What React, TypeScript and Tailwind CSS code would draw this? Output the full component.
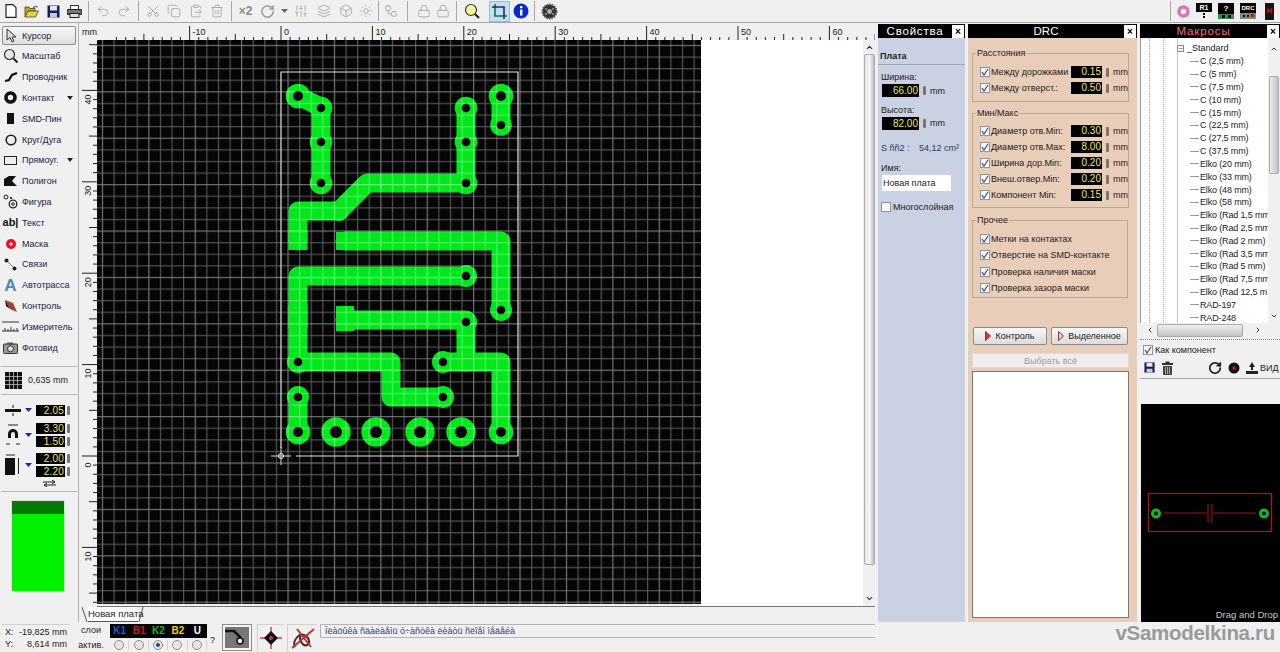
import React from "react";
import {
  Undo2,
  Redo2,
  Scissors,
  Copy,
  ClipboardPaste,
  Trash2,
  RotateCw,
  ChevronUp,
  ChevronDown,
  ChevronLeft,
  ChevronRight,
  Lock,
  Sun,
  Workflow,
  SlidersVertical,
  Layers,
  Box,
} from "lucide-react";

const GREEN = "#00e81c";

const Sep = ({ w }: { w: string }) => (
  <div className={`${w} h-[20px] flex justify-center shrink-0`}>
    <div className="w-px h-full bg-[#a8a8a8]" />
  </div>
);

const Slot = ({ w, children }: { w: string; children: React.ReactNode }) => (
  <div className={`${w} h-[22px] flex items-center justify-center shrink-0`}>{children}</div>
);

const grayIcon = { size: 14, color: "#a9a9a9", strokeWidth: 1.6 };

const SaveIcon = ({ size = 13 }: { size?: number }) => (
  <svg width={size} height={size} viewBox="0 0 13 13">
    <rect x="0.5" y="0.5" width="12" height="12" fill="#12205e" />
    <rect x="3" y="1" width="7" height="4.5" fill="#e8e8e8" />
    <rect x="3" y="8" width="7" height="4.5" fill="#c8c8d8" />
  </svg>
);

const TrashSolid = () => (
  <svg width="13" height="14" viewBox="0 0 13 14">
    <rect x="1" y="2" width="11" height="2" fill="#333" />
    <rect x="4.5" y="0.5" width="4" height="2" fill="#333" />
    <path d="M2 5h9v9H2z" fill="#444" />
    <path d="M4.5 6v7M6.5 6v7M8.5 6v7" stroke="#bbb" strokeWidth="0.8" />
  </svg>
);

const Toolbar = () => (
  <div className="h-[23px] flex items-center bg-[#f0f0f0] border-b border-[#a6a6a6] shrink-0">
    <Slot w="w-[21px]">
      <svg width="12" height="14" viewBox="0 0 12 14">
        <path d="M1 .7h7l3 3v9.6H1z" fill="#fff" stroke="#222" strokeWidth="1.2" />
      </svg>
    </Slot>
    <Slot w="w-[21.5px]">
      <svg width="15" height="13" viewBox="0 0 15 13">
        <path d="M1 2h4l1 1.5h5V6H4L1 12z" fill="#c8a430" stroke="#4a4a10" strokeWidth=".8" />
        <path d="M1 12l3-6h10.5l-3 6z" fill="#e6cf57" stroke="#4a4a10" strokeWidth=".8" />
        <path d="M9 3c2-2.4 3.5-2 4.5-.6" stroke="#2c7a2c" fill="none" strokeWidth="1.2" />
      </svg>
    </Slot>
    <Slot w="w-[21.5px]">
      <SaveIcon />
    </Slot>
    <Slot w="w-[21px]">
      <svg width="15" height="13" viewBox="0 0 15 13">
        <rect x="3.5" y=".5" width="8" height="4" fill="#fff" stroke="#333" />
        <rect x=".7" y="4.5" width="13.6" height="5" fill="#777" stroke="#222" />
        <rect x="3" y="8.5" width="9" height="4" fill="#ddd" stroke="#222" />
      </svg>
    </Slot>
    <Sep w="w-[7px]" />
    <Slot w="w-[21.5px]">
      <Undo2 {...grayIcon} />
    </Slot>
    <Slot w="w-[21.5px]">
      <Redo2 {...grayIcon} />
    </Slot>
    <Sep w="w-[7px]" />
    <Slot w="w-[21.5px]">
      <Scissors {...grayIcon} className="-rotate-90" />
    </Slot>
    <Slot w="w-[21.5px]">
      <Copy {...grayIcon} />
    </Slot>
    <Slot w="w-[21.5px]">
      <ClipboardPaste {...grayIcon} />
    </Slot>
    <Slot w="w-[21.5px]">
      <Trash2 {...grayIcon} />
    </Slot>
    <Sep w="w-[7px]" />
    <Slot w="w-[21px]">
      <span className="text-[12px] font-bold text-[#8a8a8a]">×2</span>
    </Slot>
    <Slot w="w-[22px]">
      <RotateCw size={15} color="#9a9a9a" strokeWidth={2.4} />
    </Slot>
    <Slot w="w-[12px]">
      <svg width="7" height="4" viewBox="0 0 7 4">
        <path d="M0 0h7L3.500 4z" fill="#666" />
      </svg>
    </Slot>
    <Slot w="w-[22px]">
      <SlidersVertical {...grayIcon} />
    </Slot>
    <Slot w="w-[23px]">
      <Layers {...grayIcon} />
    </Slot>
    <Slot w="w-[21px]">
      <Box {...grayIcon} />
    </Slot>
    <Slot w="w-[19px]">
      <Sun {...grayIcon} />
    </Slot>
    <Sep w="w-[7px]" />
    <Slot w="w-[18px]">
      <Workflow {...grayIcon} />
    </Slot>
    <Sep w="w-[14px]" />
    <Slot w="w-[19px]">
      <Lock {...grayIcon} />
    </Slot>
    <Slot w="w-[19px]">
      <Lock {...grayIcon} />
    </Slot>
    <Sep w="w-[8px]" />
    <Slot w="w-[24px]">
      <svg width="16" height="16" viewBox="0 0 16 16">
        <circle cx="7" cy="7" r="5.500" fill="#f6f59a" stroke="#333" strokeWidth="1.200" />
        <path d="M11 11l4 4" stroke="#222" strokeWidth="2.200" />
      </svg>
    </Slot>
    <div className="w-[21px] h-[21px] ml-[5px] flex items-center justify-center bg-[#c9dcf5] border border-[#9bb8de] shrink-0">
      <svg width="15" height="15" viewBox="0 0 15 15">
        <path d="M3 0v12h12" stroke="#0a7a3a" fill="none" strokeWidth="1.600" />
        <path d="M0 3h12v12" stroke="#12307e" fill="none" strokeWidth="1.600" />
      </svg>
    </div>
    <Slot w="w-[22px]">
      <svg width="16" height="16" viewBox="0 0 16 16">
        <circle cx="8" cy="8" r="7.500" fill="#0a28d0" />
        <rect x="7" y="6.500" width="2.400" height="6" fill="#fff" />
        <rect x="7" y="3" width="2.400" height="2.200" fill="#fff" />
      </svg>
    </Slot>
    <Sep w="w-[4px]" />
    <Slot w="w-[26px]">
      <svg width="17" height="17" viewBox="0 0 17 17">
        <circle cx="8.500" cy="8.500" r="7" fill="#333" stroke="#555" strokeWidth="2" strokeDasharray="1.500 1" />
        <circle cx="8.500" cy="8.500" r="2.500" fill="#aaa" />
        <circle cx="5" cy="6" r="1" fill="#999" />
        <circle cx="12" cy="6" r="1" fill="#999" />
        <circle cx="5" cy="11" r="1" fill="#999" />
        <circle cx="12" cy="11" r="1" fill="#999" />
      </svg>
    </Slot>
    <div className="flex-1" />
    <Sep w="w-[5px]" />
    <Slot w="w-[20px]">
      <svg width="13" height="13" viewBox="0 0 13 13">
        <circle cx="6.500" cy="6.500" r="4.500" fill="none" stroke="#d874b8" strokeWidth="3.500" />
      </svg>
    </Slot>
    <Slot w="w-[22px]">
      <div className="w-[16px] h-[17px] flex flex-col items-center">
        <span className="w-full bg-black text-white text-[7px] leading-[9px] font-bold text-center">R1</span>
        <span className="w-[2px] h-[2px] bg-black mt-[1px]" />
        <span className="w-[2px] h-[2px] bg-black mt-[1px]" />
      </div>
    </Slot>
    <Slot w="w-[22px]">
      <div className="w-[16px] h-[17px] flex flex-col">
        <span className="w-full bg-black text-white text-[8px] leading-[11px] font-bold text-center">?</span>
        <span className="h-[5px] bg-[#3e8a4e] flex justify-center items-center gap-[3px]">
          <span className="w-[3px] h-[3px] bg-black" />
          <span className="w-[3px] h-[3px] bg-black" />
        </span>
      </div>
    </Slot>
    <Slot w="w-[22px]">
      <div className="w-[16px] h-[17px] flex flex-col">
        <span className="w-full bg-black text-white text-[6px] leading-[10px] font-bold text-center">DRC</span>
        <span className="h-[6px] bg-[#7d8b6e] flex justify-center items-center gap-[2px]">
          <span className="w-[2px] h-[2px] bg-black" />
          <span className="w-[2px] h-[2px] bg-black" />
          <span className="w-[3px] h-[3px] bg-[#c81010]" />
        </span>
      </div>
    </Slot>
    <Slot w="w-[21px]">
      <div className="w-[9px] h-[17px] bg-[#151515] flex items-center justify-center">
        <span className="text-[#c81818] text-[8px] font-bold">H</span>
      </div>
    </Slot>
  </div>
);

const ToolIcon = ({ name }: { name: string }) => {
  switch (name) {
    case "cursor":
      return (
        <svg width="12" height="15" viewBox="0 0 12 15">
          <path d="M1 1v11l3-2.500 2 4.500 2-1-2-4h4z" fill="#ddd" stroke="#333" strokeWidth="1" />
        </svg>
      );
    case "zoom":
      return (
        <svg width="16" height="16" viewBox="0 0 16 16">
          <circle cx="6.500" cy="6.500" r="5" fill="#e4e8e4" stroke="#333" strokeWidth="1.200" />
          <path d="M10.500 10.500l4 4" stroke="#222" strokeWidth="2" />
        </svg>
      );
    case "wire":
      return (
        <svg width="14" height="10" viewBox="0 0 14 10">
          <path d="M1 9l4-1 3-5 5-2" fill="none" stroke="#111" strokeWidth="2.200" />
        </svg>
      );
    case "pad":
      return (
        <svg width="13" height="13" viewBox="0 0 13 13">
          <circle cx="6.500" cy="6.500" r="4.500" fill="none" stroke="#111" strokeWidth="3.600" />
        </svg>
      );
    case "smd":
      return <span className="block w-[7px] h-[11px] bg-[#111]" />;
    case "circle":
      return (
        <svg width="12" height="12" viewBox="0 0 12 12">
          <circle cx="6" cy="6" r="4.800" fill="#eee" stroke="#222" strokeWidth="1.600" />
        </svg>
      );
    case "rect":
      return <span className="block w-[13px] h-[9px] border-[1.500px] border-[#222] bg-[#eee]" />;
    case "poly":
      return (
        <svg width="13" height="10" viewBox="0 0 13 10">
          <path d="M0 10V3l5-3h7L8 5l5 5z" fill="#111" />
        </svg>
      );
    case "shape":
      return (
        <svg width="15" height="15" viewBox="0 0 15 15">
          <circle cx="3" cy="3" r="2" fill="#eee" stroke="#222" />
          <circle cx="10" cy="10" r="3.800" fill="none" stroke="#222" strokeWidth="1.300" />
          <circle cx="10" cy="10" r="1.300" fill="none" stroke="#222" />
          <path d="M7 3h2v2H7z" fill="#333" />
        </svg>
      );
    case "text":
      return <span className="text-[11px] font-bold text-[#111] leading-none">ab|</span>;
    case "mask":
      return (
        <svg width="12" height="12" viewBox="0 0 12 12">
          <circle cx="6" cy="6" r="5" fill="#e8102c" />
          <circle cx="6" cy="6" r="1.700" fill="#f4c8c8" />
        </svg>
      );
    case "links":
      return (
        <svg width="13" height="13" viewBox="0 0 13 13">
          <path d="M2 2l9 9" stroke="#777" />
          <circle cx="2.500" cy="2.500" r="2" fill="#222" />
          <circle cx="10.500" cy="10.500" r="2" fill="#222" />
        </svg>
      );
    case "auto":
      return <span className="text-[17px] font-bold leading-none text-[#4f86b5]">A</span>;
    case "check":
      return (
        <svg width="14" height="14" viewBox="0 0 14 14">
          <path d="M1 1l8 3 4 9-7-3z" fill="#a84030" />
          <path d="M1 1l5 9-4-3z" fill="#111" />
        </svg>
      );
    case "measure":
      return (
        <svg width="17" height="11" viewBox="0 0 17 11">
          <path d="M0 1h17" stroke="#333" />
          <path d="M0 10h17M3 10V7M6 10V8M9 10V6M12 10V8M15 10V7" stroke="#333" />
        </svg>
      );
    default:
      return (
        <svg width="15" height="12" viewBox="0 0 15 12">
          <rect x=".5" y="2" width="14" height="9.500" rx="1" fill="#999" stroke="#333" />
          <rect x="4" y=".5" width="6" height="2" fill="#555" />
          <circle cx="7.500" cy="6.800" r="3" fill="#ddd" stroke="#333" />
        </svg>
      );
  }
};

const tools: { icon: string; label: string; arrow?: boolean }[] = [
  { icon: "zoom", label: "Масштаб" },
  { icon: "wire", label: "Проводник" },
  { icon: "pad", label: "Контакт", arrow: true },
  { icon: "smd", label: "SMD-Пин" },
  { icon: "circle", label: "Круг/Дуга" },
  { icon: "rect", label: "Прямоуг.", arrow: true },
  { icon: "poly", label: "Полигон" },
  { icon: "shape", label: "Фигура" },
  { icon: "text", label: "Текст" },
  { icon: "mask", label: "Маска" },
  { icon: "links", label: "Связи" },
  { icon: "auto", label: "Автотрасса" },
  { icon: "check", label: "Контроль" },
  { icon: "measure", label: "Измеритель" },
  { icon: "photo", label: "Фотовид" },
];

const Value = ({ v }: { v: string }) => (
  <div className="flex items-center gap-[2px]">
    <span className="w-[29px] h-[11px] bg-black text-[#e8e86a] text-[10px] leading-[11px] text-right pr-[1px] tracking-[0.2px]">
      {v}
    </span>
    <span className="w-[3px] h-[9px] bg-[#777] rounded-[1px]" />
  </div>
);

const BlueArrow = () => (
  <svg width="7" height="4" viewBox="0 0 7 4">
    <path d="M0 0h7L3.500 4z" fill="#1a2a9a" />
  </svg>
);

const LeftPanel = () => (
  <div className="w-[79px] shrink-0 border-r border-[#b0b0b0] pt-[3px] flex flex-col text-[9px] leading-[12px]">
    <div className="mx-[2px] w-[74px] h-[19px] flex items-center pl-[3px] gap-[4px] rounded-[2px] border border-[#8c8c8c] bg-gradient-to-b from-[#f8f8f8] to-[#dedede] text-[#1b2140] mb-[1px]">
      <ToolIcon name="cursor" />
      Курсор
    </div>
    {tools.map((t) => (
      <div key={t.label} className="h-[20.800px] flex items-center pl-[2px] text-[#1b2140]">
        <span className="w-[17px] flex justify-center shrink-0">
          <ToolIcon name={t.icon} />
        </span>
        <span className="ml-[3px] whitespace-nowrap">{t.label}</span>
        {t.arrow && (
          <svg width="6" height="4" viewBox="0 0 6 4" className="ml-auto mr-[5px]">
            <path d="M0 0h6L3 4z" fill="#222" />
          </svg>
        )}
      </div>
    ))}
    <div className="h-px bg-[#b8b8b8] mx-[1px] mt-[8px] shrink-0" />
    <div className="h-[27px] flex items-center pl-[5px] gap-[6px] text-[#222] shrink-0">
      <svg width="17" height="17" viewBox="0 0 17 17">
        <rect width="17" height="17" fill="#111" />
        <path d="M4.500 0v17M8.500 0v17M12.500 0v17M0 4.500h17M0 8.500h17M0 12.500h17" stroke="#bbb" strokeWidth=".8" />
      </svg>
      0,635 mm
    </div>
    <div className="h-px bg-[#b8b8b8] mx-[1px] shrink-0" />
    <div className="pt-[9px] pl-[5px] flex flex-col shrink-0">
      <div className="h-[13px] flex items-center">
        <svg width="16" height="11" viewBox="0 0 16 11" className="mr-[4px]">
          <path d="M0 5.500h16" stroke="#111" strokeWidth="3" />
          <path d="M8 0v3M8 8v3" stroke="#111" />
        </svg>
        <BlueArrow />
        <div className="ml-[4px] flex">
          <Value v="2.05" />
        </div>
      </div>
      <div className="h-[6px]" />
      <div className="h-[24px] flex items-center">
        <svg width="16" height="24" viewBox="0 0 16 24" className="mr-[4px]">
          <path d="M3 2h10" stroke="#222" />
          <path d="M8 6a5 5 0 00-5 5v4h3v-4a2 2 0 014 0v4h3v-4a5 5 0 00-5-5z" fill="#111" />
          <path d="M1 21h4M11 21h4" stroke="#222" />
        </svg>
        <BlueArrow />
        <div className="ml-[4px] flex flex-col gap-[2px]">
          <Value v="3.30" />
          <Value v="1.50" />
        </div>
      </div>
      <div className="h-[6.500px]" />
      <div className="h-[24px] flex items-center">
        <svg width="16" height="24" viewBox="0 0 16 24" className="mr-[4px]">
          <path d="M1 2h9" stroke="#222" />
          <rect x="0" y="5" width="10" height="17" fill="#111" />
          <path d="M13.500 5v16" stroke="#222" />
        </svg>
        <BlueArrow />
        <div className="ml-[4px] flex flex-col gap-[2px]">
          <Value v="2.00" />
          <Value v="2.20" />
        </div>
      </div>
      <svg width="15" height="7" viewBox="0 0 15 7" className="ml-[37px] mt-[3px]">
        <path d="M1 2h12M10 0l3 2-3 2M14 5H2M5 3L2 5l3 2" stroke="#222" fill="none" />
      </svg>
    </div>
    <div className="h-px bg-[#b8b8b8] mx-[1px] mt-[4px] shrink-0" />
    <div className="ml-[12px] w-[52px] h-[90px] mt-[9px] flex flex-col shrink-0 shadow-[0_0_0_1px_#ddd]">
      <div className="h-[13px] bg-[#007a00]" />
      <div className="flex-1 bg-[#00f000]" />
    </div>
  </div>
);

const TopRuler = () => {
  const ticks: React.ReactNode[] = [];
  for (let i = -18; i < 67; i++) {
    const x = 281 + i * 9.14 - 97;
    const t = i % 10 === 0;
    const m = i % 5 === 0;
    ticks.push(<path key={i} d={`M${x} 14V${t ? 0 : m ? 8 : 11}`} stroke="#222" strokeWidth="1" />);
    if (t && x < 780)
      ticks.push(
        <text key={`l${i}`} x={x + 3} y="9" fontSize="9" fill="#222" fontFamily="Liberation Sans, sans-serif">
          {i}
        </text>
      );
  }
  return (
    <svg width="778" height="14" className="block">
      {ticks}
    </svg>
  );
};

const LeftRuler = () => {
  const ticks: React.ReactNode[] = [];
  for (let i = -16; i < 46; i++) {
    const y = 456 - i * 9.14 - 40;
    const t = i % 10 === 0;
    const m = i % 5 === 0;
    ticks.push(<path key={i} d={`M15 ${y}H${t ? 0 : m ? 7 : 11}`} stroke="#222" strokeWidth="1" />);
    if (t)
      ticks.push(
        <text
          key={`l${i}`}
          x="0"
          y="0"
          fontSize="9"
          fill="#222"
          fontFamily="Liberation Sans, sans-serif"
          textAnchor="middle"
          transform={`translate(9 ${y + 9}) rotate(-90)`}
        >
          {Math.abs(i)}
        </text>
      );
  }
  return (
    <svg width="15" height="564" className="block shrink-0">
      {ticks}
    </svg>
  );
};

const tracks = [
  "M298 96L321 107",
  "M321 107V183",
  "M466 107V183",
  "M501 96V125",
  "M466 183H367L339 211H298V241",
  "M345 241H501V310",
  "M466 276H298V362",
  "M345 320H466V362",
  "M443 362H501V432",
  "M298 362H391V397H443",
  "M298 397V432",
];

const pads: [number, number, number, number][] = [
  [298, 96, 12.300, 5],
  [321, 108, 11.300, 4.300],
  [321, 142, 11.300, 4.300],
  [321, 183, 11.300, 4.300],
  [466, 108, 11.300, 4.300],
  [466, 142, 11.300, 4.300],
  [466, 183, 11.300, 4.300],
  [501, 96, 12.300, 5],
  [501, 125, 10.800, 4.300],
  [466, 276, 11, 4.300],
  [501, 310, 11, 4.300],
  [466, 322, 11, 4.300],
  [298, 362, 11, 4.300],
  [443, 362, 11, 4.300],
  [443, 397, 11, 4.300],
  [298, 397, 11, 4.300],
  [298, 432, 12.300, 5],
  [501, 432, 12.300, 5],
  [336, 432, 14.700, 6],
  [376, 432, 14.700, 6],
  [420, 432, 14.700, 6],
  [461, 432, 14.700, 6],
];

const Board = () => (
  <svg width="604" height="564" viewBox="97 40 604 564" className="block shrink-0">
    <defs>
      <pattern id="fine" x="97" y="40" width="11.600" height="11.600" patternUnits="userSpaceOnUse">
        <path d="M5.500 0V11.600M0 5.500H11.600" stroke="#fff" strokeOpacity=".37" strokeWidth="1" />
      </pattern>
      <pattern id="major" x="97" y="40" width="46.400" height="46.400" patternUnits="userSpaceOnUse">
        <path d="M5.500 0V46.400M0 5.500H46.400" stroke="#fff" strokeOpacity=".2" strokeWidth="1" />
      </pattern>
    </defs>
    <rect x="97" y="40" width="604" height="564" fill="#050505" />
    {tracks.map((d) => (
      <path key={d} d={d} fill="none" stroke={GREEN} strokeWidth="19" strokeLinejoin="round" strokeLinecap="round" />
    ))}
    <rect x="288.500" y="231" width="19" height="19" fill={GREEN} />
    <rect x="336" y="232" width="18" height="18" fill={GREEN} />
    <rect x="336" y="306" width="18" height="25" fill={GREEN} />
    <rect x="288.500" y="305" width="19" height="23" fill={GREEN} />
    <circle cx="339" cy="211" r="10" fill={GREEN} />
    {pads.map(([x, y, r]) => (
      <circle key={`${x}-${y}`} cx={x} cy={y} r={r} fill={GREEN} />
    ))}
    <rect x="97" y="40" width="604" height="564" fill="url(#fine)" />
    <rect x="97" y="40" width="604" height="564" fill="url(#major)" />
    {pads.map(([x, y, , h]) => (
      <circle key={`h${x}-${y}`} cx={x} cy={y} r={h} fill="#050505" />
    ))}
    <path d="M296 456H518V72H281V448" fill="none" stroke="#e4e4e4" strokeWidth="1.200" />
    <path d="M281 447V465M271 456H291" stroke="#ddd" strokeWidth="1" />
    <circle cx="281" cy="456" r="2.500" fill="none" stroke="#eee" />
  </svg>
);

const ScrollV = () => (
  <div className="w-[12px] shrink-0 h-[566px] bg-[#f0f0f0] flex flex-col items-center">
    <ChevronUp size={9} color="#333" strokeWidth={3} className="mt-[3px]" />
    <div className="w-[11px] h-[511px] mt-[2px] bg-gradient-to-r from-[#e8e8e8] via-[#f4f4f4] to-[#bcbcc4] border border-[#aaa] rounded-[2px]" />
    <ChevronDown size={9} color="#333" strokeWidth={3} className="mt-auto mb-[3px]" />
  </div>
);

const Center = () => (
  <div className="w-[798px] shrink-0 flex flex-col pt-[3px]">
    <div className="flex h-[14px] ml-[3px]">
      <span className="w-[15px] text-[9px] leading-[13px] text-[#222]">mm</span>
      <TopRuler />
    </div>
    <div className="flex ml-[3px] h-[567px]">
      <LeftRuler />
      <div className="flex items-start border-b border-[#777] h-[567px]">
        <Board />
        <div className="w-[162px] h-[566px] bg-white" />
        <ScrollV />
      </div>
    </div>
    <div className="h-[15px] ml-[3px] flex items-center text-[9.500px] text-[#222]">
      <svg width="6" height="15" viewBox="0 0 6 15" className="shrink-0">
        <path d="M0 0l5 15" stroke="#555" />
      </svg>
      <span className="w-[50px] h-[15px] bg-white border-b border-[#555] leading-[14px] whitespace-nowrap">
        Новая плата
      </span>
      <svg width="6" height="15" viewBox="0 0 6 15" className="shrink-0">
        <path d="M1 15L5 0" stroke="#555" />
      </svg>
    </div>
  </div>
);

const PanelHeader = ({ title, color = "text-white", track = "" }: { title: string; color?: string; track?: string }) => (
  <div className="h-[14px] bg-black flex items-center shrink-0">
    <span className={`flex-1 text-center text-[11.500px] leading-[14px] ${color} ${track}`}>{title}</span>
    <span className="w-[12px] h-[13px] bg-white text-black mr-[1px] text-[10px] leading-[13px] font-bold text-center">
      ×
    </span>
  </div>
);

const Check = ({ on = true }: { on?: boolean }) => (
  <span className="w-[10px] h-[10px] shrink-0 border border-[#8b93a5] bg-[#f4f6fa] flex items-center justify-center">
    {on && (
      <svg width="8" height="8" viewBox="0 0 8 8">
        <path d="M1 4l2 3 4-6" fill="none" stroke="#3a4a86" strokeWidth="1.200" />
      </svg>
    )}
  </span>
);

const Spin = () => <span className="block w-[3px] h-[9px] bg-[#777] rounded-[1px] shrink-0" />;

const Properties = () => (
  <div className="w-[87px] shrink-0 ml-[1px] flex flex-col h-[598px] mt-[1px] bg-[#c9d1e3] text-[9px] leading-[12px] text-[#222]">
    <PanelHeader title="Свойства" track="tracking-[0.8px]" />
    <div className="px-[2px] pt-[12px] font-bold border-b border-[#9aa3b5] h-[27px]">Плата</div>
    <div className="pl-[3px] mt-[6px]">Ширина:</div>
    <div className="flex items-center ml-[4px] gap-[4px] mt-[1px] h-[13px]">
      <span className="w-[37px] h-[13px] bg-black text-[#e8e86a] text-[10px] text-right pr-[1px] leading-[13px]">66.00</span>
      <Spin />
      <span>mm</span>
    </div>
    <div className="pl-[3px] mt-[6.500px]">Высота:</div>
    <div className="flex items-center ml-[4px] gap-[4px] mt-[1px] h-[13px]">
      <span className="w-[37px] h-[13px] bg-black text-[#e8e86a] text-[10px] text-right pr-[1px] leading-[13px]">82.00</span>
      <Spin />
      <span>mm</span>
    </div>
    <div className="flex justify-between pl-[3px] pr-[6px] mt-[12.500px] text-[#27406e] whitespace-nowrap">
      <span>S ññ2 :</span>
      <span>54,12 cm²</span>
    </div>
    <div className="pl-[3px] mt-[8px]">Имя:</div>
    <div className="ml-[4px] w-[69px] h-[16px] mt-[1px] bg-white leading-[16px] pl-[1px]">Новая плата</div>
    <div className="flex items-center gap-[2px] ml-[3px] mt-[10px]">
      <Check on={false} />
      <span>Многослойная</span>
    </div>
  </div>
);

const Row = ({ label, v }: { label: string; v: string }) => (
  <div className="h-[16px] flex items-center pl-[7px]">
    <Check />
    <span className="ml-[1px] w-[80px] whitespace-nowrap">{label}</span>
    <span className="w-[31px] h-[12px] bg-black text-[#e8e86a] text-[10px] text-right pr-[1px] leading-[12px]">{v}</span>
    <span className="ml-[4px]">
      <Spin />
    </span>
    <span className="ml-[4px] whitespace-nowrap">mm</span>
  </div>
);

const Group = ({ title, h, mt, pt, children }: { title: string; h: string; mt: string; pt: string; children: React.ReactNode }) => (
  <fieldset className={`border border-[#b9a999] ml-[4px] mr-[9px] ${h} ${mt} ${pt} shrink-0`}>
    <legend className="ml-[3px] px-[1px] leading-[10px]">{title}</legend>
    {children}
  </fieldset>
);

const PlayBtn = ({ label, w, hollow }: { label: string; w: string; hollow?: boolean }) => (
  <div className={`${w} h-[18px] flex items-center justify-center gap-[4px] border border-[#8c8c8c] rounded-[2px] bg-gradient-to-b from-[#f8f8f8] to-[#dcdcdc]`}>
    <svg width="6" height="10" viewBox="0 0 6 10">
      <path d="M.5 .5L5.500 5 .5 9.500z" fill={hollow ? "#e4d0d0" : "#c04040"} stroke="#903030" />
    </svg>
    {label}
  </div>
);

const Drc = () => (
  <div className="w-[169px] shrink-0 ml-[3px] flex flex-col h-[598px] mt-[1px] bg-[#e8cdb8] text-[9px] leading-[12px] text-[#222]">
    <PanelHeader title="DRC" />
    <Group title="Расстояния" h="h-[54px]" mt="mt-[10px]" pt="pt-[6px]">
      <Row label="Между дорожками" v="0.15" />
      <Row label="Между отверст.:" v="0.50" />
    </Group>
    <Group title="Мин/Макс" h="h-[100px]" mt="mt-[6px]" pt="pt-[5px]">
      <Row label="Диаметр отв.Min:" v="0.30" />
      <Row label="Диаметр отв.Max:" v="8.00" />
      <Row label="Ширина дор.Min:" v="0.20" />
      <Row label="Внеш.отвер.Min:" v="0.20" />
      <Row label="Компонент Min:" v="0.15" />
    </Group>
    <Group title="Прочее" h="h-[83px]" mt="mt-[7px]" pt="pt-[6px]">
      {["Метки на контактах", "Отверстие на SMD-контакте", "Проверка наличия маски", "Проверка зазора маски"].map((s) => (
        <div key={s} className="h-[16.300px] flex items-center pl-[7px] gap-[1px] whitespace-nowrap">
          <Check />
          {s}
        </div>
      ))}
    </Group>
    <div className="flex gap-[4px] ml-[5px] mt-[29px] shrink-0">
      <PlayBtn label="Контроль" w="w-[74px]" />
      <PlayBtn label="Выделенное" w="w-[77px]" hollow />
    </div>
    <div className="ml-[4px] mr-[8px] mt-[8px] h-[15px] bg-[#f3ecec] border border-[#dddddd] text-center text-[#9a9a9a] leading-[14px] shrink-0">
      Выбрать всё
    </div>
    <div className="ml-[4px] mr-[8px] mt-[3px] h-[247px] bg-white border border-[#777] shrink-0" />
  </div>
);

const macroItems = [
  "C (2,5 mm)",
  "C (5 mm)",
  "C (7,5 mm)",
  "C (10 mm)",
  "C (15 mm)",
  "C (22,5 mm)",
  "C (27,5 mm)",
  "C (37,5 mm)",
  "Elko (20 mm)",
  "Elko (33 mm)",
  "Elko (48 mm)",
  "Elko (58 mm)",
  "Elko (Rad 1,5 mm",
  "Elko (Rad 2,5 mm",
  "Elko (Rad 2 mm)",
  "Elko (Rad 3,5 mm",
  "Elko (Rad 5 mm)",
  "Elko (Rad 7,5 mm",
  "Elko (Rad 12,5 m",
  "RAD-197",
  "RAD-248",
];

const Macros = () => (
  <div className="w-[140px] shrink-0 ml-[3px] flex flex-col h-[598px] mt-[1px] bg-[#f0f0f0] text-[9px] leading-[12px] text-[#222]">
    <PanelHeader title="Макросы" color="text-[#f06a8a]" track="tracking-[0.9px]" />
    <div className="h-[285px] flex shrink-0 border-l border-[#999] bg-white overflow-hidden">
      <div className="w-[9px] border-r border-dotted border-[#aaa] shrink-0" />
      <div className="w-[14px] border-r border-dotted border-[#aaa] shrink-0" />
      <div className="w-[14px] border-r border-[#c8c8c8] shrink-0" />
      <div className="flex-1 min-w-0 pt-[4px]">
        <div className="h-[12.830px] flex items-center whitespace-nowrap">
          <span className="w-[7px] h-[7px] ml-[-1px] border border-[#888] bg-white flex items-center justify-center text-[7px] leading-none">
            −
          </span>
          <span className="ml-[3px]">_Standard</span>
        </div>
        {macroItems.map((m) => (
          <div key={m} className="h-[12.830px] flex items-center whitespace-nowrap tracking-[-0.15px]">
            <span className="w-[9px] ml-[12px] h-px bg-[#999] shrink-0" />
            <span className="ml-[1px]">{m}</span>
          </div>
        ))}
      </div>
      <div className="w-[12px] bg-[#f0f0f0] flex flex-col items-center shrink-0">
        <ChevronUp size={8} color="#333" strokeWidth={3} className="mt-[7px]" />
        <div className="w-[10px] h-[98px] mt-[23px] bg-gradient-to-r from-[#eee] to-[#c0c0c8] border border-[#aaa] rounded-[2px]" />
        <ChevronDown size={8} color="#333" strokeWidth={3} className="mt-auto mb-[3px]" />
      </div>
    </div>
    <div className="h-[14px] flex items-center shrink-0 px-[2px]">
      <ChevronLeft size={8} color="#333" strokeWidth={3} className="ml-[4px]" />
      <div className="ml-[3px] w-[86px] h-[13px] bg-gradient-to-b from-[#eee] to-[#c4c4c4] border border-[#aaa] rounded-[2px]" />
      <ChevronRight size={8} color="#333" strokeWidth={3} className="ml-[11px]" />
    </div>
    <div className="h-0 border-t border-dotted border-[#888] mt-[2px]" />
    <div className="flex items-center gap-[2px] ml-[3px] mt-[4px] h-[12px] shrink-0">
      <Check />
      <span>Как компонент</span>
    </div>
    <div className="h-[17px] mt-[3px] flex items-center pl-[4px] shrink-0">
      <SaveIcon size={11} />
      <span className="ml-[6px] flex">
        <TrashSolid />
      </span>
      <RotateCw size={14} color="#222" strokeWidth={3} className="ml-[34px]" />
      <svg width="12" height="12" viewBox="0 0 12 12" className="ml-[6px]">
        <circle cx="6" cy="6" r="5.500" fill="#111" />
        <circle cx="6" cy="6" r="1.800" fill="#d01030" />
      </svg>
      <svg width="12" height="12" viewBox="0 0 12 12" className="ml-[6px]">
        <path d="M6 0l3 5H7v3H5V5H3zM0 9h12v3H0z" fill="#222" />
      </svg>
      <span className="ml-[2px] text-[9px]">ВИД</span>
    </div>
    <div className="h-px bg-[#a8a8a8] mt-[2px] shrink-0" />
    <div className="h-[25px] bg-[#f2f2f2] shrink-0" />
    <div className="flex-1 ml-px bg-black flex flex-col">
      <svg width="139" height="205" viewBox="1141 403 139 205" className="block">
        <rect x="1148.500" y="492.500" width="123" height="38" fill="none" stroke="#b01020" strokeWidth="1.300" />
        <path d="M1164 512H1207.500M1213 512H1256" stroke="#a01020" />
        <path d="M1208 503V522M1212 503V522" stroke="#b01020" />
        <circle cx="1156" cy="512.500" r="3.500" fill="#111" stroke="#12b828" strokeWidth="3" />
        <circle cx="1264" cy="512.500" r="3.500" fill="#111" stroke="#12b828" strokeWidth="3" />
      </svg>
      <div className="text-right pr-[2px] text-[#c8c8c8] text-[9.500px] leading-[12px]">Drag and Drop</div>
    </div>
  </div>
);

const layers = [
  { t: "K1", c: "text-[#1f5fd8]" },
  { t: "B1", c: "text-[#d81818]" },
  { t: "K2", c: "text-[#18b828]" },
  { t: "B2", c: "text-[#e8d020]" },
  { t: "U", c: "text-white" },
];

const Radio = ({ on }: { on?: boolean }) => (
  <span className="w-[10px] h-[10px] rounded-full border border-[#8c8c8c] bg-[#e6e6e6] flex items-center justify-center">
    {on && <span className="w-[4px] h-[4px] rounded-full bg-[#1c4a9a]" />}
  </span>
);

const StatusBar = () => (
  <div className="h-[30px] flex text-[9px] text-[#222] pt-[2px] shrink-0">
    <div className="ml-[2px] w-[68px] border-t border-[#d0d0d0] h-[26px] flex flex-col justify-center leading-[12px] pl-[3px] pr-[3px] whitespace-nowrap">
      <div className="flex justify-between">
        <span>X:</span>
        <span>-19,825 mm</span>
      </div>
      <div className="flex justify-between">
        <span>Y:</span>
        <span>8,614 mm</span>
      </div>
    </div>
    <div className="ml-[2px] w-[135px] h-[28px] flex flex-col">
      <div className="h-[14px] flex">
        <span className="w-[38px] text-center leading-[13px]">слои</span>
        <div className="flex-1 bg-black flex">
          {layers.map((l) => (
            <span key={l.t} className={`flex-1 text-center font-bold text-[10px] leading-[14px] ${l.c}`}>
              {l.t}
            </span>
          ))}
        </div>
      </div>
      <div className="h-[14px] flex">
        <span className="w-[38px] text-center leading-[14px]">актив.</span>
        <div className="flex-1 flex items-center">
          {layers.map((l) => (
            <span key={l.t} className="flex-1 flex justify-center border-r border-[#d4d4d4]">
              <Radio on={l.t === "K2"} />
            </span>
          ))}
        </div>
      </div>
    </div>
    <span className="ml-[3px] w-[12px] pt-[10px] leading-[12px]">?</span>
    <div className="w-[30px] h-[27px] border border-[#8c8c8c] bg-[#f4f4f4] p-[2px] shrink-0">
      <svg width="24" height="21" viewBox="0 0 24 21" className="block">
        <rect width="24" height="21" fill="#777" />
        <path d="M0 4h9l6 6v4" fill="none" stroke="#111" strokeWidth="2.500" />
        <circle cx="15" cy="14" r="3" fill="#eee" stroke="#111" strokeWidth="1.500" />
      </svg>
    </div>
    <div className="ml-[5px] w-[27px] h-[27px] border-l border-t border-[#d0d0d0] flex items-center justify-center shrink-0">
      <svg width="22" height="22" viewBox="0 0 22 22">
        <path d="M0 11h22M11 0v22" stroke="#d04040" strokeWidth="1.500" />
        <path d="M11 4l7 7-7 7-7-7z" fill="#111" />
        <circle cx="11" cy="11" r="2" fill="#d04040" />
      </svg>
    </div>
    <div className="ml-[3px] w-[30px] h-[27px] border-l border-t border-[#d0d0d0] flex items-center justify-center shrink-0">
      <svg width="24" height="22" viewBox="0 0 24 22">
        <path d="M4 20c-3-6 4-14 9-12s7 8 3 10-9-6-6-9" fill="none" stroke="#333" strokeWidth="2" />
        <path d="M1 21L23 2" stroke="#c83030" strokeWidth="2" />
        <path d="M6 2l14 18" stroke="#c83030" strokeWidth="2" />
      </svg>
    </div>
    <div className="ml-[3px] w-[555px] h-[14px] border-t border-b border-l border-[#b4b4b4] pl-[4px] leading-[12px] text-[#3a4270] whitespace-nowrap overflow-hidden shrink-0">
      Ïëàöûêà ñäàëàåìü ó÷àñòêà ëèàòü ñëîåì ìåäåéà
    </div>
    <div className="flex-1 relative">
      <span className="absolute right-[5px] -top-[5px] text-[20.500px] leading-[28px] font-bold text-[#9a9a9a] tracking-[-0.3px] whitespace-nowrap">
        vSamodelkina.ru
      </span>
    </div>
  </div>
);

export default function App() {
  return (
    <div className="w-[1280px] h-[652px] overflow-hidden bg-[#f0f0f0] flex flex-col font-['Liberation_Sans',Arial,sans-serif]">
      <Toolbar />
      <div className="flex flex-1 min-h-0">
        <LeftPanel />
        <Center />
        <Properties />
        <Drc />
        <Macros />
      </div>
      <StatusBar />
    </div>
  );
}
